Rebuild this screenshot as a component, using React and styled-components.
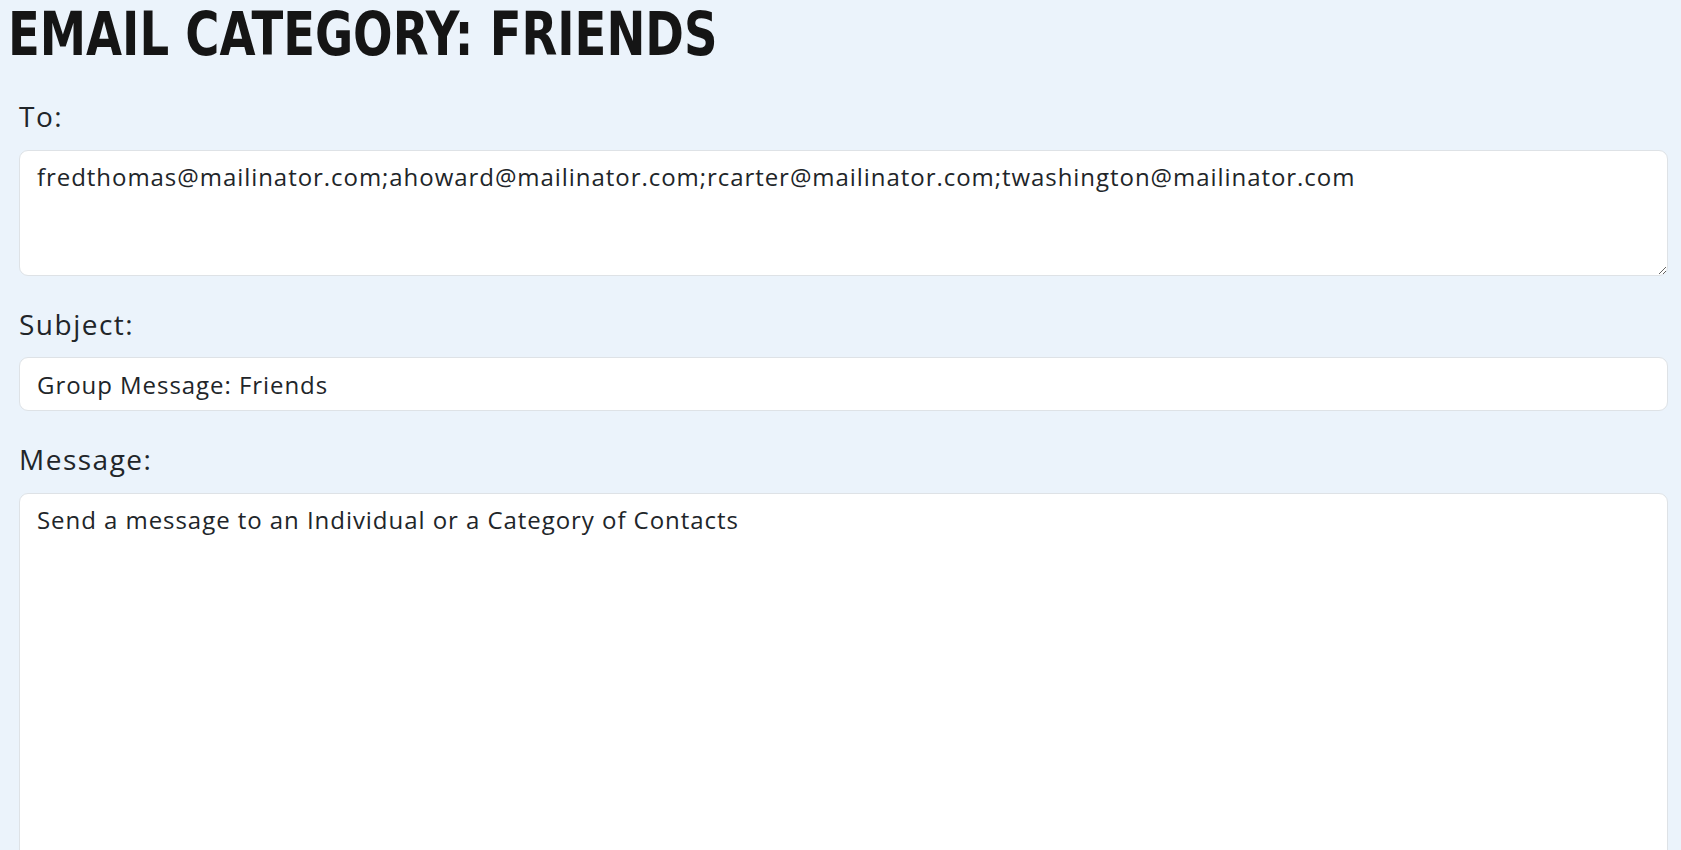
import React from "react";
import styled, { createGlobalStyle } from "styled-components";

const GlobalStyle = createGlobalStyle`
  html, body {
    margin: 0;
    padding: 0;
    background: #ebf3fb;
    overflow: hidden;
  }
  body {
    font-family: "Open Sans", "Noto Sans", sans-serif;
    color: #212529;
  }
  *, *::before, *::after { box-sizing: border-box; }
`;

const Page = styled.main`
  display: flex;
  flex-direction: column;
  min-height: 100vh;
`;

const Title = styled.h1`
  margin: 0;
  padding: 1px 0 0 8px;
  font-family: "Liberation Sans Narrow", "DejaVu Sans Condensed", "Roboto Condensed", "Liberation Sans", sans-serif;
  font-weight: 700;
  font-size: 60px;
  line-height: 1.1;
  letter-spacing: 0;
  color: #151515;
  text-transform: uppercase;
  transform: scaleX(0.862);
  transform-origin: 8px 0;
  white-space: nowrap;
`;

const Form = styled.form`
  display: flex;
  flex-direction: column;
  gap: 32px;
  padding: 33px 13px 0 19px;
`;

const Field = styled.div`
  display: flex;
  flex-direction: column;
`;

const Label = styled.label`
  display: block;
  margin-bottom: 16px;
  font-size: 28px;
  line-height: 1.2;
  letter-spacing: 1.5px;
  color: #212529;
`;

const fieldStyles = `
  display: block;
  width: 100%;
  margin: 0;
  padding: 8px 17px;
  font-family: "Open Sans", "Noto Sans", sans-serif;
  font-size: 24px;
  line-height: 1.5;
  letter-spacing: 0.95px;
  color: #212529;
  background: #ffffff;
  border: 1px solid #dee2e6;
  border-radius: 9px;
  outline: none;
`;

const TextArea = styled.textarea`
  ${fieldStyles}
  height: ${(p) => p.$height}px;
  resize: vertical;
  overflow: hidden;
`;

const TextInput = styled.input`
  ${fieldStyles}
  height: 54px;
`;

export default function App() {
  return (
    <>
      <GlobalStyle />
      <Page>
        <Title>Email Category: Friends</Title>
        <Form onSubmit={(e) => e.preventDefault()}>
          <Field>
            <Label htmlFor="to">To:</Label>
            <TextArea
              id="to"
              $height={126}
              spellCheck={false}
              defaultValue="fredthomas@mailinator.com;ahoward@mailinator.com;rcarter@mailinator.com;twashington@mailinator.com"
            />
          </Field>
          <Field>
            <Label htmlFor="subject">Subject:</Label>
            <TextInput id="subject" spellCheck={false} defaultValue="Group Message: Friends" />
          </Field>
          <Field>
            <Label htmlFor="message">Message:</Label>
            <TextArea
              id="message"
              $height={420}
              spellCheck={false}
              defaultValue="Send a message to an Individual or a Category of Contacts"
            />
          </Field>
        </Form>
      </Page>
    </>
  );
}
